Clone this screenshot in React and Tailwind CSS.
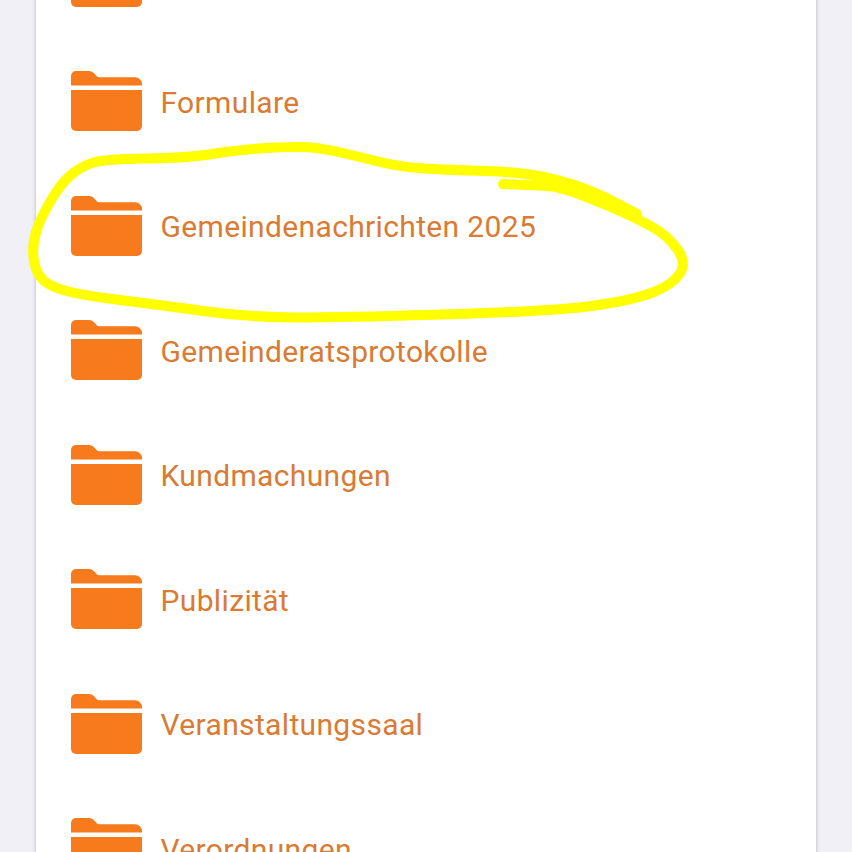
// first row is scrolled out of view, only its icon shows
const folders = [
  '',
  'Formulare',
  'Gemeindenachrichten 2025',
  'Gemeinderatsprotokolle',
  'Kundmachungen',
  'Publizität',
  'Veranstaltungssaal',
  'Verordnungen',
];

// hand drawn marker line, page coordinates
const scribble = [
  [503, 184], [535, 185], [560, 187], [600, 202], [640, 220], [668, 236], [687, 263], [672, 285], [633, 300],
  [557, 311], [360, 317], [253, 318], [153, 304], [87, 296], [50, 287], [35, 272], [32, 243],
  [42, 215], [62, 182], [82, 166], [105, 159], [187, 158], [237, 150], [280, 147], [317, 147],
  [360, 157], [400, 167], [450, 170], [520, 172], [563, 181], [597, 193], [637, 214],
];

const smoothPath = pts => {
  let d = `M${pts[0][0]} ${pts[0][1]}`;
  for (let i = 1; i < pts.length - 1; i++) {
    const mx = (pts[i][0] + pts[i + 1][0]) / 2;
    const my = (pts[i][1] + pts[i + 1][1]) / 2;
    d += ` Q${pts[i][0]} ${pts[i][1]} ${mx} ${my}`;
  }
  const last = pts[pts.length - 1];
  return `${d} L${last[0]} ${last[1]}`;
};

const FolderIcon = () => (
  <svg width="71" height="60" viewBox="0 0 71 60" className="shrink-0" fill="#f77a1c">
    <path d="M0 14.5V5a5 5 0 0 1 5-5h13c2 0 3.500.7 4.800 2l3.200 3.500c.6.600 1.200.8 2 .8H64a7 7 0 0 1 7 7v1.200z" />
    <path d="M0 19h71v36a5 5 0 0 1-5 5H5a5 5 0 0 1-5-5z" />
  </svg>
);

const App = () => (
  <div className="relative h-[852px] overflow-hidden bg-[#f0f0f6] font-['Roboto',sans-serif]">
    <div className="mx-[36px] w-[780px] -mt-[85.5px] bg-white shadow-[0_0_4px_rgba(0,0,0,0.25)]">
      {folders.map((name, i) => (
        <div key={i} className="flex h-[124.5px] items-center gap-[18.5px] pl-[35px]">
          <FolderIcon />
          <span className="relative top-[1.5px] text-[30px] leading-none tracking-[0.35px] text-[#d97b33]">{name}</span>
        </div>
      ))}
    </div>

    {/* yellow marker annotation */}
    <svg width="852" height="852" viewBox="0 0 852 852" className="absolute inset-0" fill="none">
      <path d={smoothPath(scribble)} stroke="#ffff00" strokeWidth="10" strokeLinecap="round" strokeLinejoin="round" />
    </svg>
  </div>
);

export default App;
